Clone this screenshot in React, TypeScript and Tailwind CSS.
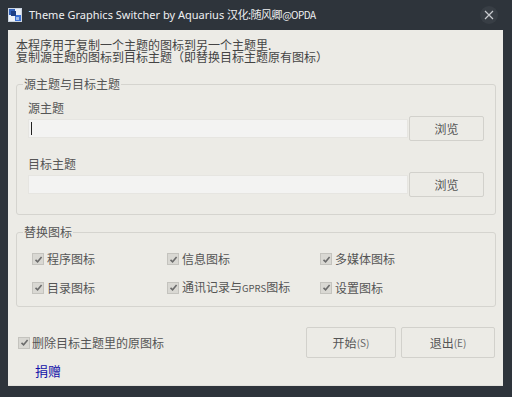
import { ReactNode } from "react";

const cjk = "font-['Noto_Sans_CJK_SC',sans-serif]";

const Check = ({ className = "" }: { className?: string }) => (
  <span
    className={`flex h-[12px] w-[12px] shrink-0 items-center justify-center border border-[#c4c3be] bg-[#d9d8d3] ${className}`}
  >
    <svg width="9" height="9" viewBox="0 0 9 9">
      <path d="M1.5 4.8 L3.6 6.8 L7.6 2" fill="none" stroke="#6b6b6b" strokeWidth="1.6" />
    </svg>
  </span>
);

const CheckItem = ({ children }: { children: ReactNode }) => (
  <label className="flex items-center gap-[3px] leading-[16px]">
    <Check />
    <span>{children}</span>
  </label>
);

const Btn = ({ children, className = "" }: { children: ReactNode; className?: string }) => (
  <button
    className={`flex items-center justify-center rounded-[2px] border border-[#d2d1cc] bg-[#ecebe6] text-[12px] text-[#555] ${className}`}
  >
    {children}
  </button>
);

const Hotkey = ({ k }: { k: string }) => (
  <span className="text-[10px] text-[#666]">({k})</span>
);

const ThemeRow = ({ label, caret }: { label: string; caret?: boolean }) => (
  <div>
    <div className="leading-[14px]">{label}</div>
    <div className="mt-[1px] flex items-center gap-[1px]">
      <div className="flex h-[19px] w-[380px] items-center bg-[#f3f3f2] pl-[3px] shadow-[inset_0_0_0_1px_#e6e5e1]">
        {caret && <span className="h-[13px] w-[1px] bg-[#222]" />}
      </div>
      <Btn className="h-[25px] w-[75px]">浏览</Btn>
    </div>
  </div>
);

const AppIcon = () => (
  <svg width="14" height="14" viewBox="0 0 14 14">
    <rect x="0" y="0" width="14" height="14" fill="#c9d3e0" />
    <rect x="1" y="1" width="6" height="6" fill="#2f5fb8" />
    <rect x="7" y="7" width="6" height="6" fill="#3c72d6" />
    <rect x="7" y="1" width="6" height="6" fill="#e9eef6" />
    <rect x="1" y="7" width="6" height="6" fill="#eef2f8" />
    <rect x="3" y="3" width="5" height="5" fill="#1d3f86" />
    <rect x="8" y="9" width="3" height="3" fill="#9fbbe8" />
  </svg>
);

export default function App() {
  return (
    <div className={`flex h-[397px] w-[512px] flex-col bg-[#2e343b] ${cjk}`}>
      {/* title bar */}
      <div className="flex h-[30px] items-center pl-[8px] pr-[14px]">
        <AppIcon />
        <span className="ml-[7px] font-['Noto_Sans','Noto_Sans_CJK_SC',sans-serif] text-[11px] text-[#eef0f2]">
          Theme Graphics Switcher by Aquarius{" "}
          <span className="font-['Noto_Sans_CJK_SC',sans-serif] tracking-[-0.5px]">
            汉化:随风卿<span className="text-[10px]">@OPDA</span>
          </span>
        </span>
        <span className="ml-auto flex h-[18px] w-[18px] items-center justify-center rounded-full bg-[#383e45]">
          <svg width="10" height="10" viewBox="0 0 10 10">
            <path d="M1 1 L9 9 M9 1 L1 9" stroke="#c9ccd0" strokeWidth="1.2" />
          </svg>
        </span>
      </div>

      {/* client area */}
      <div className="ml-[8px] h-[356px] w-[495px] border-b border-[#e2e1dc] bg-[#ecebe6] px-[8px] text-[12px] text-[#555]">
        <div className="pt-[9px] leading-[12px] text-[#444]">
          <div>本程序用于复制一个主题的图标到另一个主题里.</div>
          <div>复制源主题的图标到目标主题（即替换目标主题原有图标）</div>
        </div>

        <fieldset className="mt-[14px] w-[480px] rounded-[3px] border border-[#d5d4cf]">
          <legend className="ml-[6px] px-[1px] leading-[14px]">源主题与目标主题</legend>
          <div className="pb-[17px] pl-[11px] pt-[10px]">
            <ThemeRow label="源主题" caret />
            <div className="mt-[16px]">
              <ThemeRow label="目标主题" />
            </div>
          </div>
        </fieldset>

        <fieldset className="mt-[10px] w-[480px] rounded-[3px] border border-[#d5d4cf]">
          <legend className="ml-[6px] px-[1px] leading-[14px]">替换图标</legend>
          <div className="grid grid-cols-[135px_153px_1fr] gap-y-[12px] pb-[10px] pl-[15px] pt-[12px]">
            <CheckItem>程序图标</CheckItem>
            <CheckItem>信息图标</CheckItem>
            <CheckItem>多媒体图标</CheckItem>
            <CheckItem>目录图标</CheckItem>
            <CheckItem>
              通讯记录与<span className="text-[9.5px]">GPRS</span>图标
            </CheckItem>
            <CheckItem>设置图标</CheckItem>
          </div>
        </fieldset>

        <div className="mt-[20px] flex items-center">
          <label className="ml-[2px] flex items-center gap-[2px]">
            <Check />
            <span>删除目标主题里的原图标</span>
          </label>
          <div className="ml-auto flex gap-[5px]">
            <Btn className="h-[31px] w-[90px]">
              开始<Hotkey k="S" />
            </Btn>
            <Btn className="h-[31px] w-[94px]">
              退出<Hotkey k="E" />
            </Btn>
          </div>
        </div>

        <div className="ml-[19px] mt-[6px] text-[13px] leading-[14px] text-[#1212a8]">捐赠</div>
      </div>
    </div>
  );
}
